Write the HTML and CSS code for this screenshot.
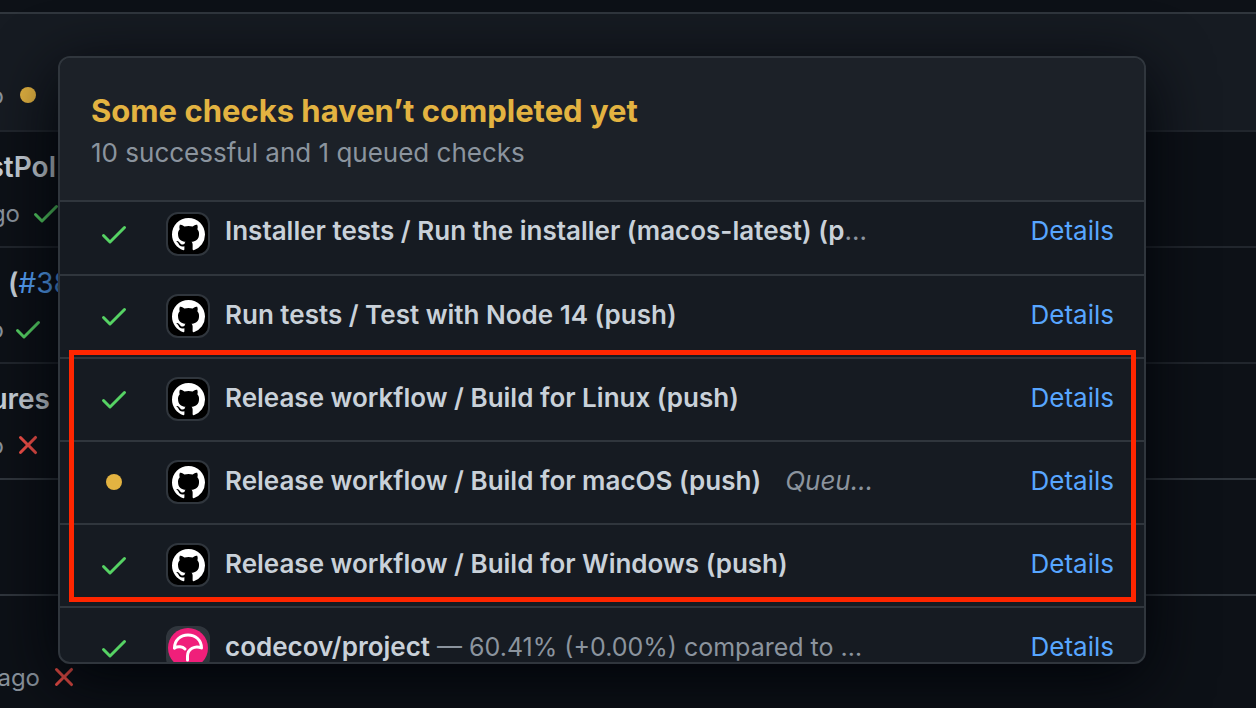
FILE: index.html
```html
<!DOCTYPE html>
<html lang="en">
<head>
<meta charset="utf-8">
<title>Commit checks</title>
<link rel="stylesheet" href="styles.css">
</head>
<body>
<svg class="defs" aria-hidden="true">
  <symbol id="check" viewBox="0 0 16 16"><path d="M13.78 4.22a.75.75 0 010 1.06l-7.25 7.25a.75.75 0 01-1.06 0L2.22 9.28a.75.75 0 011.06-1.06L6 10.94l6.72-6.72a.75.75 0 011.06 0z"/></symbol>
  <symbol id="cross" viewBox="0 0 16 16"><path d="M3.72 3.72a.75.75 0 011.06 0L8 6.94l3.22-3.22a.75.75 0 111.06 1.06L9.06 8l3.22 3.22a.75.75 0 11-1.06 1.06L8 9.06l-3.22 3.22a.75.75 0 01-1.06-1.06L6.94 8 3.72 4.78a.75.75 0 010-1.06z"/></symbol>
  <symbol id="dot" viewBox="0 0 16 16"><circle cx="8" cy="8" r="4"/></symbol>
  <symbol id="github" viewBox="0 0 16 16"><path d="M8 0C3.58 0 0 3.58 0 8c0 3.54 2.29 6.53 5.47 7.59.4.07.55-.17.55-.38 0-.19-.01-.82-.01-1.49-2.01.37-2.53-.49-2.69-.94-.09-.23-.48-.94-.82-1.13-.28-.15-.68-.52-.01-.53.63-.01 1.08.58 1.23.82.72 1.21 1.87.87 2.33.66.07-.52.28-.87.51-1.07-1.78-.2-3.64-.89-3.64-3.95 0-.87.31-1.59.82-2.15-.08-.2-.36-1.02.08-2.12 0 0 .67-.21 2.2.82.64-.18 1.32-.27 2-.27s1.36.09 2 .27c1.53-1.04 2.2-.82 2.2-.82.44 1.1.16 1.92.08 2.12.51.56.82 1.27.82 2.15 0 3.07-1.87 3.75-3.65 3.95.29.25.54.73.54 1.48 0 1.07-.01 1.93-.01 2.2 0 .21.15.46.55.38A8.01 8.01 0 0016 8c0-4.42-3.58-8-8-8z"/></symbol>
</svg>

<main class="page">
  <div class="topbar"></div>
  <section class="commit commit-latest">
    <div class="line title"></div>
    <div class="line meta"><span class="lead lead-xs">o</span><svg class="icon pending"><use href="#dot"/></svg></div>
  </section>
  <section class="commit">
    <div class="line title"><span class="lead lead-lg">stPol</span></div>
    <div class="line meta meta-near"><span class="lead lead-sm">go</span><svg class="icon success"><use href="#check"/></svg></div>
  </section>
  <section class="commit">
    <div class="line title title-ref">(<a href="#pr">#38</a></div>
    <div class="line meta"><span class="lead lead-xs">o</span><svg class="icon success"><use href="#check"/></svg></div>
  </section>
  <section class="commit">
    <div class="line title"><span class="lead lead-md">ures</span></div>
    <div class="line meta"><span class="lead lead-xs">o</span><svg class="icon failure"><use href="#cross"/></svg></div>
  </section>
  <section class="commit commit-edge">
    <div class="line title"></div>
    <div class="line meta"></div>
  </section>
  <section class="commit commit-edge">
    <div class="line title"></div>
    <div class="line meta"><span class="lead lead-ml">ago</span><svg class="icon failure"><use href="#cross"/></svg></div>
  </section>
</main>

<div class="popover" role="dialog" aria-labelledby="checks-title">
  <header class="popover-header">
    <h3 id="checks-title">Some checks haven’t completed yet</h3>
    <p>10 successful and 1 queued checks</p>
  </header>
  <ul class="checks">
    <li class="check">
      <svg class="icon success"><use href="#check"/></svg>
      <span class="avatar"><svg class="mark"><use href="#github"/></svg></span>
      <div class="name"><strong>Installer tests / Run the installer (macos-latest) (p</strong>…</div>
      <a class="details" href="#c1">Details</a>
    </li>
    <li class="check">
      <svg class="icon success"><use href="#check"/></svg>
      <span class="avatar"><svg class="mark"><use href="#github"/></svg></span>
      <div class="name"><strong>Run tests / Test with Node 14 (push)</strong></div>
      <a class="details" href="#c2">Details</a>
    </li>
    <li class="check">
      <svg class="icon success"><use href="#check"/></svg>
      <span class="avatar"><svg class="mark"><use href="#github"/></svg></span>
      <div class="name"><strong>Release workflow / Build for Linux (push)</strong></div>
      <a class="details" href="#c3">Details</a>
    </li>
    <li class="check">
      <svg class="icon pending"><use href="#dot"/></svg>
      <span class="avatar"><svg class="mark"><use href="#github"/></svg></span>
      <div class="name"><strong>Release workflow / Build for macOS (push)</strong><em>Queu…</em></div>
      <a class="details" href="#c4">Details</a>
    </li>
    <li class="check">
      <svg class="icon success"><use href="#check"/></svg>
      <span class="avatar"><svg class="mark"><use href="#github"/></svg></span>
      <div class="name"><strong>Release workflow / Build for Windows (push)</strong></div>
      <a class="details" href="#c5">Details</a>
    </li>
    <li class="check">
      <svg class="icon success"><use href="#check"/></svg>
      <span class="avatar avatar-codecov">
        <svg class="umbrella" viewBox="0 0 40 40"><circle cx="20" cy="20" r="20" fill="#f01f7a"/><g fill="none" stroke="#fff" stroke-width="3" stroke-linejoin="round" stroke-linecap="round"><path d="M6.500 20C6.500 12 12.500 7 20 7S33.500 12 33.500 20C27 17 19.500 21 19.500 28V32"/><path d="M6.500 20C10 18 14.500 18.500 17 21"/></g></svg>
      </span>
      <div class="name"><strong>codecov/project</strong><span class="summary"> — 60.41% (+0.00%) compared to …</span></div>
      <a class="details" href="#c6">Details</a>
    </li>
  </ul>
  <div class="highlight"></div>
</div>
</body>
</html>
```

FILE: styles.css
```css
* { box-sizing: border-box; }

body {
  margin: 0;
  min-height: 100vh;
  position: relative;
  overflow: hidden;
  background: #0d1117;
  color: #c9d1d9;
  font-family: Inter, "Liberation Sans", sans-serif;
  font-size: 26px;
}

a { color: #58a6ff; text-decoration: none; }

.defs { position: absolute; width: 0; height: 0; }

.icon { width: 32px; height: 32px; flex: none; fill: currentColor; }
.success { color: #56d364; }
.pending { color: #e3b341; }
.failure { color: #f85149; }

/* Commit list behind the popover */
.page { height: 100vh; overflow: hidden; }
.topbar { height: 12px; }
.commit { padding: 12px 0 10px; border-top: 2px solid #21262d; }
.commit-latest { padding-bottom: 12px; background: #161b22; border-color: #30363d; }
.commit-edge { border-color: #30363d; }
.line { display: flex; align-items: center; height: 46px; }
.title { font-size: 28px; font-weight: 600; }
.title a { font-weight: 400; }
.title-ref { padding-left: 8px; }
.meta { gap: 8px; font-size: 24px; color: #8b949e; }
.lead { display: flex; flex: none; justify-content: flex-end; }
.lead-xs { width: 4px; }
.lead-sm { width: 20px; }
.lead-ml { width: 40px; }
.lead-md { width: 50px; }
.lead-lg { width: 56px; }
.meta-near { gap: 10px; }

/* Checks popover */
.popover {
  position: absolute;
  top: 56px;
  left: 58px;
  right: 110px;
  border: 2px solid #30363d;
  border-radius: 12px;
  background: #161b22;
  box-shadow: 0 16px 64px #010409;
}
.popover-header {
  padding: 32px 31px 26px;
  border-bottom: 2px solid #30363d;
  border-radius: 10px 10px 0 0;
  background: #1c2128;
}
.popover-header h3 {
  margin: 0;
  font-size: 31px;
  line-height: 42px;
  font-weight: 700;
  color: #e3b341;
}
.popover-header p { margin: 0; line-height: 42px; color: #8b949e; }

.checks {
  height: 460px;
  margin: 0;
  padding: 0;
  overflow: hidden;
  list-style: none;
  border-radius: 0 0 10px 10px;
}
.check {
  display: flex;
  align-items: flex-start;
  padding: 18px 30px 19px 38px;
  border-top: 2px solid #30363d;
  line-height: 42px;
}
.check:first-child { padding-top: 10px; padding-bottom: 18px; border-top: 0; line-height: 38px; }
.check .icon { margin-top: 6px; }
.avatar {
  display: flex;
  align-items: center;
  justify-content: center;
  flex: none;
  width: 44px;
  height: 44px;
  margin: 0 15px 0 36px;
  border: 2px solid #30363d;
  border-radius: 12px;
  background: #000;
}
.avatar-codecov { background: #30363d; }
.mark { width: 33px; height: 33px; fill: #fff; }
.umbrella { width: 40px; height: 40px; }
.name {
  flex: 1;
  min-width: 0;
  white-space: nowrap;
  color: #8b949e;
}
.name strong { font-weight: 600; color: #c9d1d9; }
.name em { margin-left: 24px; }
.summary { font-size: 25px; }
.details { flex: none; }

.highlight {
  position: absolute;
  top: 292px;
  left: 9px;
  right: 8px;
  height: 252px;
  border: 5px solid #ff2600;
  pointer-events: none;
}
```
